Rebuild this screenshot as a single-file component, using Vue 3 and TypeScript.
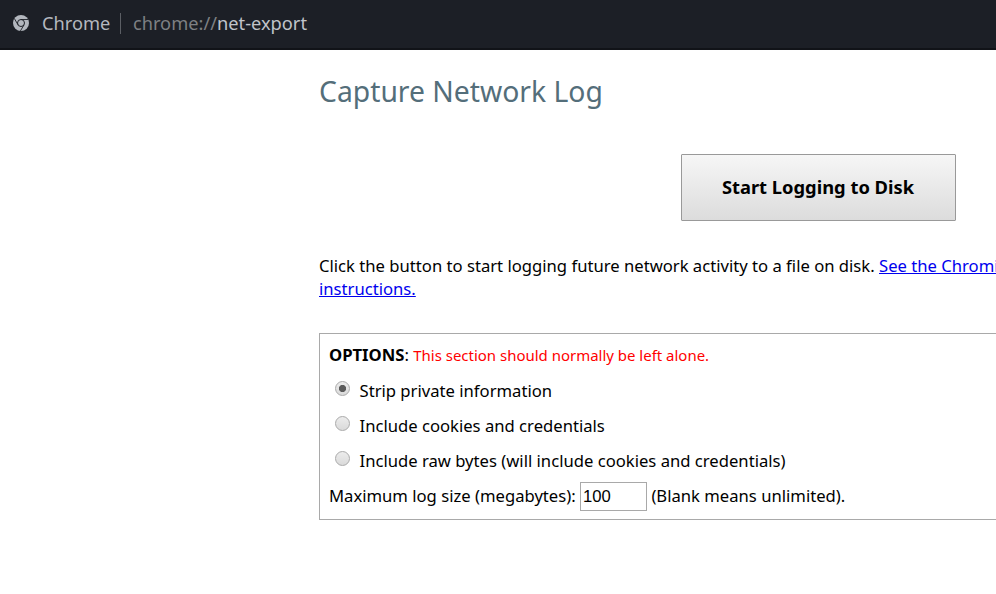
<script setup lang="ts">
import { ref } from 'vue'

interface CaptureOption {
  value: string
  label: string
}

const options: CaptureOption[] = [
  { value: 'strip', label: 'Strip private information' },
  { value: 'cookies', label: 'Include cookies and credentials' },
  { value: 'raw', label: 'Include raw bytes (will include cookies and credentials)' },
]
const selected = ref<string>('strip')
const maxSize = ref<string>('100')
</script>

<template>
  <div class="window">
    <header class="omnibox">
      <svg class="logo" viewBox="0 0 16 16" aria-hidden="true">
        <circle cx="8" cy="8" r="8" fill="#b3b7be" />
        <circle cx="8" cy="8" r="3.5" fill="#b3b7be" stroke="#1c1f26" stroke-width="1" />
        <path d="M8 4.5H15.2M4.97 9.75L1.35 3.5M11.03 9.75L7.4 16" stroke="#1c1f26" stroke-width="0.9" />
      </svg>
      <span class="scheme-name">Chrome</span>
      <span class="divider"></span>
      <span class="url"><span class="dim">chrome://</span>net-export</span>
    </header>
    <main class="page">
      <h1>Capture Network Log</h1>
      <div class="button-row">
        <button type="button" class="start">Start Logging to Disk</button>
      </div>
      <p class="intro">
        Click the button to start logging future network activity to a file on disk.
        <a href="#">See the Chromi<br>instructions.</a>
      </p>
      <section class="options">
        <div class="options-title"><b>OPTIONS</b>: <span class="warning">This section should normally be left alone.</span></div>
        <label v-for="option in options" :key="option.value" class="choice">
          <input v-model="selected" type="radio" name="capture" :value="option.value">
          <span>{{ option.label }}</span>
        </label>
        <div class="size-row">
          <span>Maximum log size (megabytes):</span>
          <input v-model="maxSize" class="size" type="text">
          <span>(Blank means unlimited).</span>
        </div>
      </section>
    </main>
  </div>
</template>

<style>
body {
  margin: 0;
  background: #fff;
}
</style>

<style scoped>
.window {
  width: 100%;
  height: 594px;
  overflow: hidden;
  box-sizing: border-box;
  font-family: "Noto Sans", sans-serif;
  font-size: 16.65px;
  line-height: 23px;
  color: #000;
}
.omnibox {
  box-sizing: border-box;
  height: 50px;
  padding: 0 0 1px 13px;
  display: flex;
  align-items: center;
  background: #1c1f26;
  border-bottom: 2px solid #111318;
  font-size: 18.25px;
  color: #b4b8bf;
  white-space: pre;
}
.scheme-name,
.url {
  padding-bottom: 2px;
}
.logo {
  width: 16px;
  height: 16px;
  margin: 0 13px 1px 0;
}
.divider {
  width: 1px;
  height: 21px;
  margin: 0 12px 0 9.5px;
  background: #5b5e64;
}
.url {
  color: #c0c4ca;
}
.dim {
  color: #7e8083;
}
.page {
  width: 998px;
  margin-left: 319px;
}
h1 {
  margin: 0;
  padding-top: 20px;
  font-size: 28.3px;
  line-height: 42px;
  font-weight: 400;
  color: #546e7a;
}
.button-row {
  display: flex;
  justify-content: center;
  margin-top: 42px;
}
.start {
  box-sizing: border-box;
  width: 275px;
  height: 67px;
  padding: 0 0 2px;
  border: 1px solid #999;
  border-radius: 1px;
  background: linear-gradient(#f6f6f6, #dcdcdc);
  font: 700 18.33px "Noto Sans", sans-serif;
  color: #000;
}
.intro {
  margin: 33px 0;
  white-space: nowrap;
}
.intro a {
  color: #0000ee;
}
.options {
  box-sizing: border-box;
  height: 187px;
  padding: 9px;
  border: 1px solid #a9a9a9;
}
.warning {
  color: #f00;
  font-size: 14.98px;
}
.options-title {
  height: 23px;
}
.choice {
  display: flex;
  height: 23px;
  margin-top: 12px;
  padding-left: 6px;
}
.choice span {
  padding-top: 1px;
}
.choice input {
  appearance: none;
  box-sizing: border-box;
  width: 15px;
  height: 15px;
  margin: 3px 9.5px 0 0;
  border: 1px solid #aaa;
  border-radius: 50%;
  background: linear-gradient(#ececec, #dadada);
}
.choice input:checked {
  background: radial-gradient(circle, #5b5b5b 3.2px, transparent 4px), linear-gradient(#ececec, #dadada);
}
.size-row {
  display: flex;
  align-items: center;
  height: 29px;
  margin-top: 11px;
}
.size-row span {
  padding-bottom: 2px;
}
.size {
  box-sizing: border-box;
  width: 67px;
  height: 29px;
  margin: 0 4px 0 4.7px;
  padding: 0 1.5px;
  border: 1px solid #a9a9a9;
  border-radius: 0;
  background: #fff;
  font: 16.67px "Liberation Sans", sans-serif;
  color: #000;
}
</style>
